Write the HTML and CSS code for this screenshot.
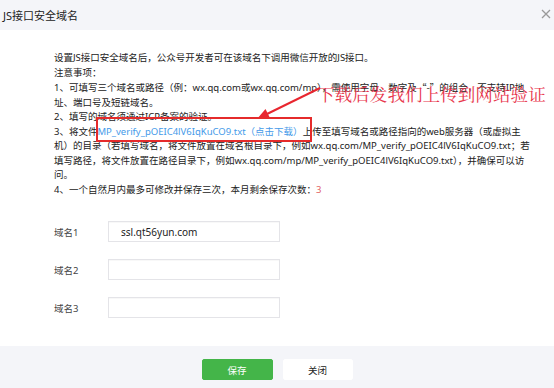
FILE: index.html
```html
<!DOCTYPE html>
<html lang="zh-CN">
  <head>
    <meta charset="UTF-8" />
    <title>JS接口安全域名</title>
    <link rel="stylesheet" href="styles.css">
  </head>
  <body>
    <div class="dialog">
      <div class="dialog-hd">
        <h3>JS接口安全域名</h3>
        <span class="close">
          <svg width="10" height="10" viewBox="0 0 10 10">
            <path d="M1 1L9 9M9 1L1 9" stroke="#9a9a9a" stroke-width="1.3" fill="none" />
          </svg>
        </span>
      </div>

      <div class="dialog-bd">
        <!-- notes -->
        <div class="notes">
          <p>设置JS接口安全域名后，公众号开发者可在该域名下调用微信开放的JS接口。</p>
          <p>注意事项：</p>
          <p>1、可填写三个域名或路径（例：wx.qq.com或wx.qq.com/mp），需使用字母、数字及<span class="cjk">“-”</span>的组合，不支持IP地址、端口号及短链域名。</p>
          <p>2、填写的域名须通过ICP备案的验证。</p>
          <p>3、将文件<a href="#" class="link">MP_verify_pOEIC4lV6IqKuCO9.txt（点击下载）</a>上传至填写域名或路径指向的web服务器（或虚拟主机）的目录（若填写域名，将文件放置在域名根目录下，例如wx.qq.com/MP_verify_pOEIC4lV6IqKuCO9.txt；若填写路径，将文件放置在路径目录下，例如wx.qq.com/mp/MP_verify_pOEIC4lV6IqKuCO9.txt），并确保可以访问。</p>
          <p>4、一个自然月内最多可修改并保存三次，本月剩余保存次数：<em class="count">3</em></p>
        </div>

        <!-- domain inputs -->
        <div class="domain-form">
          <div class="form-row">
            <label>域名1</label>
            <input type="text" value="ssl.qt56yun.com">
          </div>
          <div class="form-row">
            <label>域名2</label>
            <input type="text">
          </div>
          <div class="form-row">
            <label>域名3</label>
            <input type="text">
          </div>
        </div>
      </div>

      <div class="dialog-ft">
        <button class="btn btn-primary">保存</button>
        <button class="btn btn-default">关闭</button>
      </div>

      <!-- red annotation drawn over the dialog -->
      <div class="mark-text">下载后发我们上传到网站验证</div>
      <svg class="mark-arrow" width="75" height="40" viewBox="0 0 75 40">
        <path d="M70 4L17 30" stroke="#e8262f" stroke-width="2" fill="none" />
        <polygon points="7,35 20,34 15.5,25" fill="#e8262f" />
      </svg>
      <div class="mark-box"></div>
    </div>
  </body>
</html>
```

FILE: styles.css
```css
* {
  margin: 0;
  padding: 0;
  box-sizing: border-box;
}

body {
  font-family: "Noto Sans", "Noto Sans CJK SC", sans-serif;
  background: #fff;
  color: #222;
}

.dialog {
  position: relative;
  width: 554px;
  height: 388px;
  display: flex;
  flex-direction: column;
  background: #fff;
}

.dialog-hd {
  height: 30px;
  background: #f4f5f9;
  display: flex;
  justify-content: space-between;
  align-items: center;
  padding: 0 3px 0 3px;
}

.dialog-hd h3 {
  font-size: 11px;
  font-weight: normal;
  color: #222;
}

.close {
  display: flex;
  margin-top: -3px;
}

.dialog-bd {
  flex: 1;
  padding: 21px 0 0 54px;
}

.notes {
  width: 479px;
  font-size: 9.5px;
  line-height: 14.5px;
}

/* full-width quotes, like the CJK font draws them */
.cjk {
  font-family: "Noto Sans CJK SC", sans-serif;
}

.link {
  color: #459ae9;
  text-decoration: none;
}

.count {
  font-style: normal;
  color: #e15f63;
}

.domain-form {
  margin-top: 24px;
  display: flex;
  flex-direction: column;
  gap: 17px;
}

.form-row {
  display: flex;
  align-items: center;
}

.form-row label {
  width: 54px;
  font-size: 9.5px;
  color: #444;
}

.form-row input {
  width: 172px;
  height: 21px;
  border: 1px solid #e4e4e8;
  box-shadow: inset 0 1px 1px rgba(0, 0, 0, 0.03);
  padding: 0 12px;
  font-family: "Noto Sans", "Noto Sans CJK SC", sans-serif;
  font-size: 10px;
  color: #222;
  outline: none;
}

.dialog-ft {
  height: 42px;
  background: #f4f5f9;
  display: flex;
  justify-content: center;
  gap: 10px;
  padding-top: 13px;
}

.btn {
  width: 71px;
  height: 21px;
  border-radius: 2px;
  font-family: "Noto Sans", "Noto Sans CJK SC", sans-serif;
  font-size: 9.5px;
  cursor: pointer;
}

.btn-primary {
  background: #44b549;
  border: 1px solid #44b549;
  color: #fff;
}

.btn-default {
  width: 70px;
  background: #fff;
  border: 1px solid #fff;
  color: #222;
}

/* annotation layer */
.mark-text {
  position: absolute;
  left: 317px;
  top: 82px;
  font-family: "Noto Serif CJK SC", "Noto Sans CJK SC", serif;
  font-size: 17.6px;
  line-height: 24px;
  color: #e8364c;
  white-space: nowrap;
}

.mark-arrow {
  position: absolute;
  left: 250px;
  top: 84px;
}

.mark-box {
  position: absolute;
  left: 96px;
  top: 117px;
  width: 216px;
  height: 25px;
  border: 2px solid #e52b2b;
}
```
